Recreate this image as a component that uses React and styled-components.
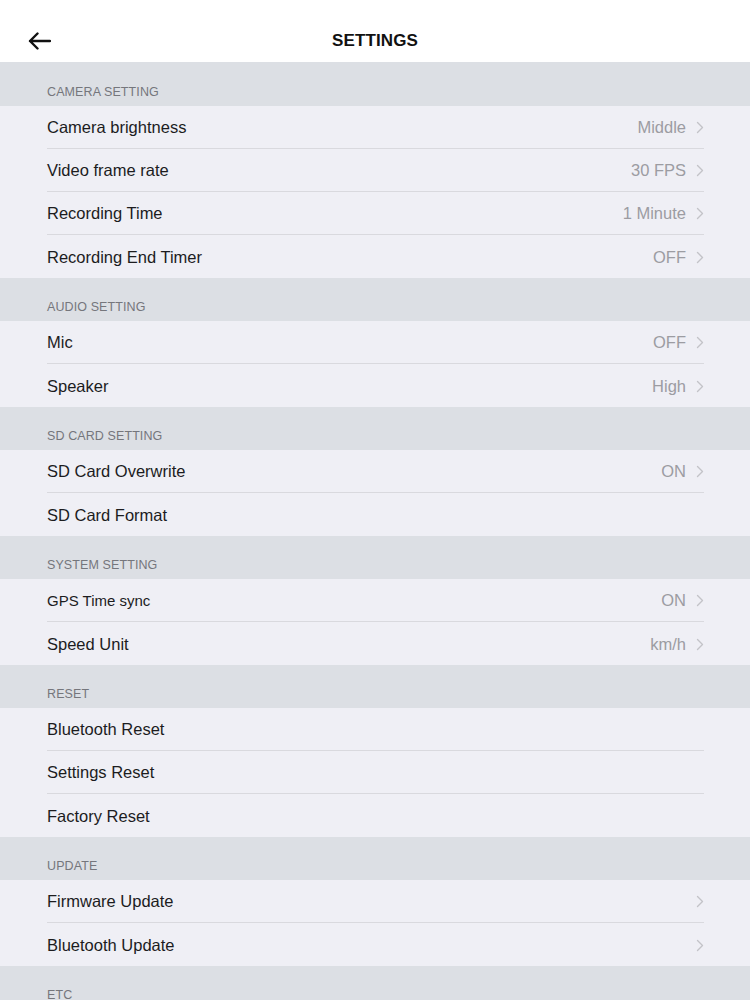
import React from "react";
import styled, { createGlobalStyle } from "styled-components";

const GlobalStyle = createGlobalStyle`
  html, body {
    margin: 0;
    padding: 0;
    background: #dcdfe4;
  }
  body {
    font-family: "Liberation Sans", Arial, sans-serif;
    -webkit-font-smoothing: antialiased;
  }
`;

const Page = styled.div`
  width: 750px;
  min-height: 1000px;
  background: #dcdfe4;
  display: flex;
  flex-direction: column;
`;

const NavBar = styled.header`
  height: 62px;
  box-sizing: border-box;
  padding-top: 20px;
  background: #fff;
  display: grid;
  grid-template-columns: 80px 1fr 80px;
  align-items: center;
  flex-shrink: 0;
`;

const BackButton = styled.button`
  border: 0;
  background: none;
  padding: 0 0 0 27px;
  height: 40px;
  display: flex;
  align-items: center;
  cursor: pointer;
  color: #111;
`;

const Title = styled.h1`
  margin: 0;
  text-align: center;
  font-size: 17px;
  font-weight: 700;
  color: #111;
  letter-spacing: 0.1px;
`;

const Section = styled.section`
  display: flex;
  flex-direction: column;
`;

const SectionHeader = styled.div`
  height: ${(p) => (p.$first ? "44px" : "43px")};
  box-sizing: border-box;
  padding: 0 47px 7px;
  display: flex;
  align-items: flex-end;
  font-size: 12.5px;
  color: #75767c;
  text-transform: uppercase;
  letter-spacing: 0.1px;
`;

const List = styled.ul`
  list-style: none;
  margin: 0;
  padding: 0;
  background: #efeff5;
`;

const Row = styled.li`
  height: 43px;
  margin-left: 47px;
  margin-right: 46px;
  padding-top: 1px;
  box-sizing: border-box;
  display: flex;
  align-items: center;
  border-bottom: ${(p) => (p.$last ? "0" : "1px solid #d9d9de")};
`;

const Label = styled.span`
  flex: 1;
  font-size: ${(p) => (p.$small ? "15px" : "16.5px")};
  color: #1c1c1e;
`;

const Value = styled.span`
  font-size: 16.5px;
  color: #9c9ca2;
  margin-right: 10px;
`;

const Chevron = styled.svg`
  width: 8px;
  height: 13px;
  flex-shrink: 0;
`;

const ArrowLeft = () => (
  <svg width="24" height="20" viewBox="0 0 24 20" fill="none">
    <path
      d="M23 10H3M10.5 2.5L3 10l7.5 7.5"
      stroke="currentColor"
      strokeWidth="2.4"
      strokeLinecap="round"
      strokeLinejoin="round"
    />
  </svg>
);

const sections = [
  {
    title: "Camera Setting",
    rows: [
      { label: "Camera brightness", value: "Middle", arrow: true },
      { label: "Video frame rate", value: "30 FPS", arrow: true },
      { label: "Recording Time", value: "1 Minute", arrow: true },
      { label: "Recording End Timer", value: "OFF", arrow: true },
    ],
  },
  {
    title: "Audio Setting",
    rows: [
      { label: "Mic", value: "OFF", arrow: true },
      { label: "Speaker", value: "High", arrow: true },
    ],
  },
  {
    title: "SD Card Setting",
    rows: [
      { label: "SD Card Overwrite", value: "ON", arrow: true },
      { label: "SD Card Format" },
    ],
  },
  {
    title: "System Setting",
    rows: [
      { label: "GPS Time sync", value: "ON", arrow: true, small: true },
      { label: "Speed Unit", value: "km/h", arrow: true },
    ],
  },
  {
    title: "Reset",
    rows: [
      { label: "Bluetooth Reset" },
      { label: "Settings Reset" },
      { label: "Factory Reset" },
    ],
  },
  {
    title: "Update",
    rows: [
      { label: "Firmware Update", arrow: true },
      { label: "Bluetooth Update", arrow: true },
    ],
  },
  { title: "ETC", rows: [] },
];

export default function App() {
  return (
    <>
      <GlobalStyle />
      <Page>
        <NavBar>
          <BackButton aria-label="Back">
            <ArrowLeft />
          </BackButton>
          <Title>SETTINGS</Title>
          <span />
        </NavBar>
        {sections.map((section, s) => (
          <Section key={section.title}>
            <SectionHeader $first={s === 0}>{section.title}</SectionHeader>
            {section.rows.length > 0 && (
              <List>
                {section.rows.map((row, i) => (
                  <Row key={row.label} $last={i === section.rows.length - 1}>
                    <Label $small={row.small}>{row.label}</Label>
                    {row.value && <Value>{row.value}</Value>}
                    {row.arrow && (
                      <Chevron viewBox="0 0 8 13" fill="none">
                        <path
                          d="M1.5 1.5l5 5-5 5"
                          stroke="#c3c3c8"
                          strokeWidth="1.4"
                          strokeLinecap="round"
                          strokeLinejoin="round"
                        />
                      </Chevron>
                    )}
                  </Row>
                ))}
              </List>
            )}
          </Section>
        ))}
      </Page>
    </>
  );
}
